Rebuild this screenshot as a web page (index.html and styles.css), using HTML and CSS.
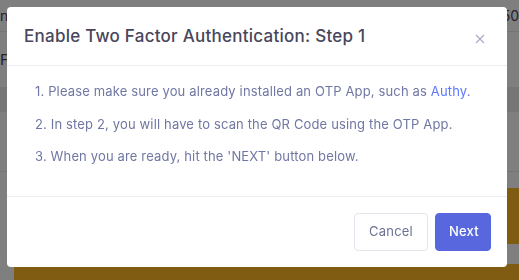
FILE: index.html
```html
<!DOCTYPE html>
<html lang="en">
<head>
<meta charset="utf-8">
<title>Enable Two Factor Authentication</title>
<link rel="stylesheet" href="styles.css">
</head>
<body>
<div class="page">
  <div class="top-row"><span class="cut-left">nl</span><span class="cut-right">50</span></div>
  <div class="row-f"><span class="cut-left">F</span></div>
  <div class="band"></div>
  <div class="row-plain"></div>
  <div class="row-actions"><div class="warn-btn"></div></div>
  <div class="warn-bar"></div>
</div>
<div class="backdrop"></div>
<div class="modal">
  <div class="modal-header">
    <h5 class="modal-title">Enable Two Factor Authentication: Step 1</h5>
    <button class="close" aria-label="Close">
      <svg width="10" height="10" viewBox="0 0 10 10"><path d="M1 1L9 9M9 1L1 9" stroke="#a7abc3" stroke-width="1.1" fill="none"/></svg>
    </button>
  </div>
  <div class="modal-body">
    <p>1. Please make sure you already installed an OTP App, such as <a href="#">Authy</a>.</p>
    <p>2. In step 2, you will have to scan the QR Code using the OTP App.</p>
    <p>3. When you are ready, hit the 'NEXT' button below.</p>
  </div>
  <div class="modal-footer">
    <button class="btn btn-secondary">Cancel</button>
    <button class="btn btn-primary">Next</button>
  </div>
</div>
</body>
</html>
```

FILE: styles.css
```css
html, body {
  margin: 0;
  padding: 0;
  width: 519px;
  height: 280px;
  overflow: hidden;
  font-family: "Inter", "Open Sans", sans-serif;
  font-size: 13px;
  background: #ffffff;
}

.page {
  display: flex;
  flex-direction: column;
  width: 519px;
  height: 280px;
  color: #48465b;
}

.top-row {
  height: 32px;
  box-sizing: border-box;
  border-bottom: 1px solid #e6e6e6;
  display: flex;
  justify-content: space-between;
  align-items: center;
  font-size: 14px;
  overflow: hidden;
}

.row-f {
  height: 55px;
  display: flex;
  align-items: center;
  font-size: 15px;
}

.band {
  height: 25px;
  background: #ececec;
}

.row-plain {
  height: 60px;
  box-sizing: border-box;
  border-bottom: 1px solid #e6e6e6;
}

.row-actions {
  height: 92px;
  display: flex;
  justify-content: flex-end;
  padding-top: 16px;
  box-sizing: border-box;
}

.warn-btn {
  width: 14px;
  height: 56px;
  background: #ffb822;
}

.warn-bar {
  flex: 1;
  background: #ffb822;
  margin-left: 14px;
}

.backdrop {
  position: fixed;
  inset: 0;
  background: rgba(0, 0, 0, 0.5);
}

.modal {
  position: fixed;
  top: 7px;
  left: 7px;
  width: 500px;
  background: #ffffff;
  border-radius: 4px;
  display: flex;
  flex-direction: column;
}

.modal-header {
  display: flex;
  justify-content: space-between;
  align-items: center;
  padding: 16px 16px 16px 17px;
  border-bottom: 1px solid #ebedf2;
}

.modal-title {
  margin: 0;
  font-size: 17px;
  font-weight: 500;
  line-height: 26px;
  letter-spacing: 0.25px;
  color: #48465b;
}

.close {
  border: 0;
  background: none;
  padding: 0;
  margin: 6px 6px 0 0;
  display: flex;
}

.modal-body {
  padding: 16px 16px 16px 28px;
  color: #7077a3;
}

.modal-body p {
  margin: 0 0 13px;
  line-height: 19.5px;
  letter-spacing: 0.15px;
}

.modal-body a {
  color: #5d78ff;
  text-decoration: none;
}

.modal-footer {
  display: flex;
  justify-content: flex-end;
  gap: 7px;
  padding: 16px 16px 16px;
  border-top: 1px solid #ebedf2;
}

.btn {
  font-family: inherit;
  font-size: 13px;
  line-height: 19.5px;
  padding: 8.25px 13px;
  border-radius: 4px;
  border: 1px solid transparent;
  letter-spacing: 0.2px;
}

.btn-secondary {
  background: #ffffff;
  border-color: #e2e5ec;
  color: #6c7293;
  width: 74px;
}

.btn-primary {
  background: #5867dd;
  border-color: #5867dd;
  color: #ffffff;
  font-weight: 500;
  width: 56px;
}
```
